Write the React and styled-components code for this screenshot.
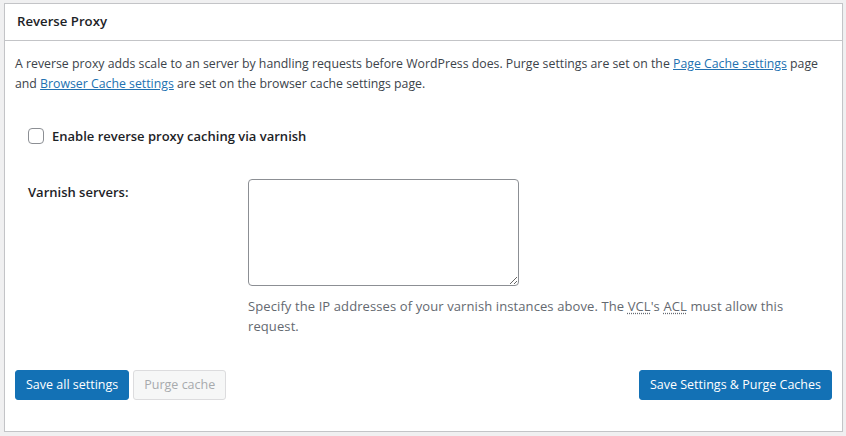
import React from "react";
import styled, { createGlobalStyle } from "styled-components";

const Global = createGlobalStyle`
  html, body { margin: 0; padding: 0; background: #f0f0f1; }
  body { font-family: "Open Sans", "Noto Sans", sans-serif; color: #3c434a; font-size: 13px; }
  * { box-sizing: border-box; }
`;

const Page = styled.div`
  padding: 3px 3px 0 4px;
  width: 846px;
`;

const Panel = styled.div`
  background: #fff;
  border: 1px solid #c3c4c7;
  box-shadow: 0 1px 1px rgba(0, 0, 0, 0.04);
`;

const Header = styled.h3`
  margin: 0;
  padding: 8px 12px;
  font-size: 13.2px;
  line-height: 19.5px;
  font-weight: 600;
  color: #1d2327;
  border-bottom: 1px solid #c3c4c7;
`;

const Inside = styled.div`
  padding: 0 10px 31px 10px;
`;

const Intro = styled.p`
  margin: 13px 0;
  font-size: 12.3px;
  line-height: 20px;
  color: #3c434a;
`;

const Link = styled.a`
  color: #2271b1;
  text-decoration: underline;
`;

const FormTable = styled.div`
  padding-left: 13px;
`;

const CheckRow = styled.label`
  display: flex;
  align-items: center;
  gap: 8px;
  padding: 21px 0 20px;
  font-size: 13px;
  font-weight: 600;
  color: #1d2327;
  line-height: 16px;
  cursor: pointer;
`;

const Checkbox = styled.input.attrs({ type: "checkbox" })`
  appearance: none;
  margin: 0;
  width: 16px;
  height: 16px;
  border: 1px solid #8c8f94;
  border-radius: 4px;
  background: #fff;
  flex: none;
`;

const FieldRow = styled.div`
  display: flex;
  padding-bottom: 15px;
`;

const FieldLabel = styled.div`
  width: 210px;
  padding: 18px 10px 0 0;
  font-size: 13px;
  font-weight: 600;
  line-height: 20px;
  color: #1d2327;
  flex: none;
`;

const FieldBody = styled.div`
  flex: 1;
  padding: 15px 10px 0 10px;
`;

const TextArea = styled.textarea`
  display: block;
  width: 271px;
  height: 107px;
  border: 1px solid #8c8f94;
  border-radius: 4px;
  background: #fff;
  font-family: inherit;
  resize: both;
  margin: 0;
`;

const Description = styled.p`
  margin: 10px 0 0;
  font-size: 13px;
  letter-spacing: 0.1px;
  line-height: 20px;
  color: #646970;
`;

const Abbr = styled.abbr`
  text-decoration: underline dotted;
  text-underline-offset: 2px;
`;

const Actions = styled.div`
  display: flex;
  justify-content: space-between;
  align-items: center;
  margin-top: 19px;
`;

const Group = styled.div`
  display: flex;
  gap: 4px;
`;

const Button = styled.button`
  height: 30px;
  padding: 0 10px;
  font-family: inherit;
  font-size: 12.5px;
  line-height: 28px;
  border-radius: 3px;
  border: 1px solid ${(p) => (p.$primary ? "#1371b5" : "#dcdcde")};
  background: ${(p) => (p.$primary ? "#1371b5" : "#f6f7f7")};
  color: ${(p) => (p.$primary ? "#fff" : "#a7aaad")};
  cursor: ${(p) => (p.disabled ? "default" : "pointer")};
  white-space: nowrap;
`;

export default function App() {
  return (
    <Page>
      <Global />
      <Panel>
        <Header>Reverse Proxy</Header>
        <Inside>
          <Intro>
            A reverse proxy adds scale to an server by handling requests before WordPress does. Purge settings are set on the{" "}
            <Link href="#">Page Cache settings</Link> page and <Link href="#">Browser Cache settings</Link> are set on the browser cache settings page.
          </Intro>
          <FormTable>
            <CheckRow>
              <Checkbox />
              Enable reverse proxy caching via varnish
            </CheckRow>
            <FieldRow>
              <FieldLabel>Varnish servers:</FieldLabel>
              <FieldBody>
                <TextArea />
                <Description>
                  Specify the IP addresses of your varnish instances above. The <Abbr title="Varnish Configuration Language">VCL</Abbr>'s{" "}
                  <Abbr title="Access Control List">ACL</Abbr> must allow this request.
                </Description>
              </FieldBody>
            </FieldRow>
          </FormTable>
          <Actions>
            <Group>
              <Button $primary>Save all settings</Button>
              <Button disabled>Purge cache</Button>
            </Group>
            <Button $primary>Save Settings &amp; Purge Caches</Button>
          </Actions>
        </Inside>
      </Panel>
    </Page>
  );
}
